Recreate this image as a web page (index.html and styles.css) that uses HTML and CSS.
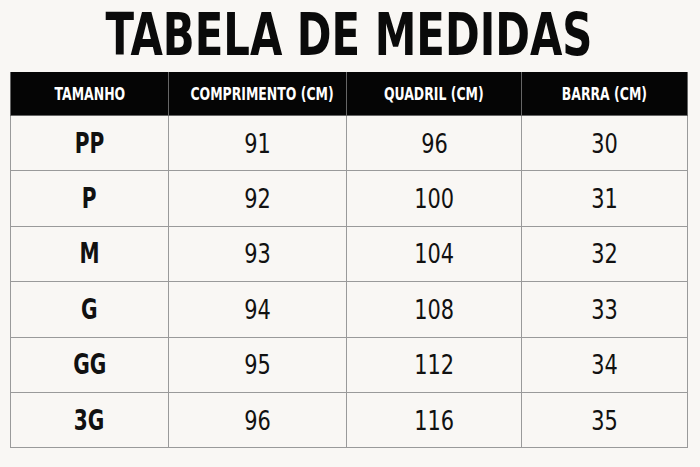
FILE: index.html
```html
<!DOCTYPE html>
<html lang="pt">
<head>
<meta charset="utf-8">
<link rel="stylesheet" href="styles.css">
</head>
<body>
<main class="page">
  <h1 class="title">TABELA DE MEDIDAS</h1>
  <table class="sizes">
    <thead>
      <tr><th class="c1"><span class="n">TAMANHO</span></th><th class="c2"><span class="n">COMPRIMENTO (CM)</span></th><th class="c3"><span class="n">QUADRIL (CM)</span></th><th class="c4"><span class="n">BARRA (CM)</span></th></tr>
    </thead>
    <tbody>
      <tr><td class="size"><span class="n">PP</span></td><td><span class="n">91</span></td><td><span class="n">96</span></td><td><span class="n">30</span></td></tr>
      <tr><td class="size"><span class="n">P</span></td><td><span class="n">92</span></td><td><span class="n">100</span></td><td><span class="n">31</span></td></tr>
      <tr><td class="size"><span class="n">M</span></td><td><span class="n">93</span></td><td><span class="n">104</span></td><td><span class="n">32</span></td></tr>
      <tr><td class="size"><span class="n">G</span></td><td><span class="n">94</span></td><td><span class="n">108</span></td><td><span class="n">33</span></td></tr>
      <tr><td class="size"><span class="n">GG</span></td><td><span class="n">95</span></td><td><span class="n">112</span></td><td><span class="n">34</span></td></tr>
      <tr><td class="size"><span class="n">3G</span></td><td><span class="n">96</span></td><td><span class="n">116</span></td><td><span class="n">35</span></td></tr>
    </tbody>
  </table>
</main>
</body>
</html>
```
FILE: styles.css
```css
html, body {
  margin: 0;
  padding: 0;
  background: #f9f7f4;
}
.page {
  width: 700px;
  height: 467px;
  padding: 0 12px 0 10px;
  box-sizing: border-box;
  font-family: "DejaVu Sans Condensed", "DejaVu Sans", sans-serif;
  color: #111;
}
.n {
  display: inline-block;
  white-space: nowrap;
  transform: scaleX(0.86);
  transform-origin: center;
}
.title {
  margin: 0;
  height: 72px;
  line-height: normal;
  text-align: center;
  white-space: nowrap;
  font-size: 59px;
  font-weight: 700;
  color: #0a0a0a;
  transform: scaleX(0.788);
  transform-origin: center;
}
.sizes {
  width: 678px;
  border-collapse: collapse;
  table-layout: fixed;
}
.sizes th {
  background: #050505;
  color: #fff;
  height: 43px;
  font-size: 18px;
  font-weight: 700;
  padding: 0;
  border: 1px solid #666;
  border-top: 0;
}
.sizes th .n {
  transform: scaleX(0.77);
}
.c1 { width: 157px; }
.c2 { width: 177px; }
.c3 { width: 174px; }
.sizes td {
  height: 54.4px;
  padding: 0;
  text-align: center;
  font-size: 27px;
  border: 1px solid #9a9a9a;
}
.sizes td.size {
  font-weight: 700;
  font-size: 28px;
}
.sizes td.size .n {
  transform: scaleX(0.8);
}
```
